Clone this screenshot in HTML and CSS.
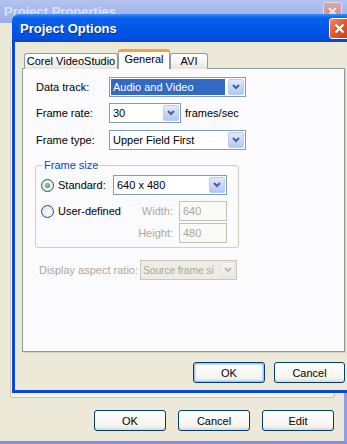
FILE: index.html
```html
<html>
	<head>
		<title>Project Options</title>
		<meta charset="utf-8"/>
		<link rel="stylesheet" href="styles.css">
	</head>
	<body>
		<div class="bg-window">
			<div class="bg-title">
				<span class="bg-title-text">Project Properties</span>
				<span class="bg-close">
					<svg width="9" height="9" viewBox="0 0 9 9"><path d="M1 1 L8 8 M8 1 L1 8" stroke="#f3e6e8" stroke-width="2"/></svg>
				</span>
			</div>
			<div class="bg-body">
				<div class="bg-panel"></div>
				<div class="bg-buttons">
					<button class="xp-btn">OK</button>
					<button class="xp-btn">Cancel</button>
					<button class="xp-btn">Edit</button>
				</div>
			</div>
		</div>

		<div class="dialog">
			<div class="titlebar">
				<span class="title-text">Project Options</span>
				<span class="close-btn">
					<svg width="11" height="11" viewBox="0 0 11 11"><path d="M1.5 1.5 L9.5 9.5 M9.5 1.5 L1.5 9.5" stroke="#fff" stroke-width="2.2"/></svg>
				</span>
			</div>
			<div class="dialog-body">
				<div class="tabs">
					<div class="tab tab-corel">Corel VideoStudio</div>
					<div class="tab tab-active tab-general">General</div>
					<div class="tab tab-avi">AVI</div>
				</div>
				<div class="tab-panel">
					<div class="row row-first">
						<span class="label">Data track:</span>
						<div class="combo combo-wide">
							<span class="combo-text combo-selected">Audio and Video</span>
							<span class="combo-btn"><svg width="8" height="6" viewBox="0 0 8 6"><path d="M1 1 L4 4 L7 1" fill="none" stroke="#4d6185" stroke-width="2"/></svg></span>
						</div>
					</div>
					<div class="row row-second">
						<span class="label">Frame rate:</span>
						<div class="combo combo-rate">
							<span class="combo-text">30</span>
							<span class="combo-btn"><svg width="8" height="6" viewBox="0 0 8 6"><path d="M1 1 L4 4 L7 1" fill="none" stroke="#4d6185" stroke-width="2"/></svg></span>
						</div>
						<span class="unit">frames/sec</span>
					</div>
					<div class="row row-third">
						<span class="label">Frame type:</span>
						<div class="combo combo-wide">
							<span class="combo-text">Upper Field First</span>
							<span class="combo-btn"><svg width="8" height="6" viewBox="0 0 8 6"><path d="M1 1 L4 4 L7 1" fill="none" stroke="#4d6185" stroke-width="2"/></svg></span>
						</div>
					</div>

					<fieldset class="group">
						<legend>Frame size</legend>
						<div class="row">
							<span class="radio-item radio-std"><span class="radio checked"></span>Standard:</span>
							<div class="combo combo-size">
								<span class="combo-text">640 x 480</span>
								<span class="combo-btn"><svg width="8" height="6" viewBox="0 0 8 6"><path d="M1 1 L4 4 L7 1" fill="none" stroke="#4d6185" stroke-width="2"/></svg></span>
							</div>
						</div>
						<div class="row row-user">
							<span class="radio-item radio-user"><span class="radio"></span>User-defined</span>
							<span class="sub-label">Width:</span>
							<span class="field">640</span>
						</div>
						<div class="row row-height">
							<span class="spacer"></span>
							<span class="sub-label">Height:</span>
							<span class="field">480</span>
						</div>
					</fieldset>

					<div class="row row-aspect">
						<span class="label label-disabled">Display aspect ratio:</span>
						<div class="combo combo-disabled">
							<span class="combo-text">Source frame si</span>
							<span class="combo-btn"><svg width="8" height="6" viewBox="0 0 8 6"><path d="M1 1 L4 4 L7 1" fill="none" stroke="#bdbcb4" stroke-width="2"/></svg></span>
						</div>
					</div>
				</div>
				<div class="dialog-buttons">
					<button class="xp-btn xp-default">OK</button>
					<button class="xp-btn btn-cancel">Cancel</button>
				</div>
			</div>
		</div>
	</body>
</html>
```

FILE: styles.css
```css
body {
	margin: 0;
	width: 347px;
	height: 444px;
	overflow: hidden;
	position: relative;
	font-family: "Liberation Sans", Arial, sans-serif;
	font-size: 11px;
	color: #000;
	background-color: #ece9d8;
}

/* window behind */
.bg-window {
	height: 444px;
	box-sizing: border-box;
	display: flex;
	flex-direction: column;
	border-right: 3px solid #8e9fe2;
	border-bottom: 3px solid #8191dc;
}

.bg-title {
	height: 23px;
	flex-shrink: 0;
	display: flex;
	justify-content: space-between;
	align-items: flex-start;
	background: linear-gradient(#b3c2ee, #9cade5);
	margin-right: -3px;
	padding-left: 4px;
}

.bg-title-text {
	font-weight: bold;
	font-size: 13px;
	color: #d9e1f6;
	margin-top: 4px;
}

.bg-close {
	width: 19px;
	height: 19px;
	margin-top: 2px;
	margin-right: 5px;
	box-sizing: border-box;
	border: 1px solid #e6dbe2;
	border-radius: 3px;
	background: linear-gradient(#d6a6a8, #c58b8e);
	display: flex;
	align-items: center;
	justify-content: center;
}

.bg-body {
	flex: 1;
	display: flex;
	flex-direction: column;
	background-color: #ece9d8;
}

.bg-panel {
	margin-top: 24px;
	margin-left: 10px;
	width: 325px;
	height: 351px;
	box-sizing: border-box;
	border: 1px solid #c7c5b6;
	border-top: none;
	border-radius: 0 0 3px 3px;
	background-color: #f3f2eb;
	box-shadow: inset 1px 0 0 #fff;
}

.bg-buttons {
	display: flex;
	justify-content: flex-end;
	gap: 12px;
	margin-top: 12px;
	padding-right: 10px;
}

/* xp push button */
.xp-btn {
	width: 72px;
	height: 21px;
	box-sizing: border-box;
	border: 1px solid #003c74;
	border-radius: 3px;
	background: linear-gradient(#ffffff, #f5f4ef 80%, #dcd8cc);
	font-family: "Liberation Sans", Arial, sans-serif;
	font-size: 11px;
	color: #000;
	padding: 0;
}

.xp-default {
	box-shadow: inset 0 0 0 1px #a9c1ee, inset 0 0 0 2px #cddcf7;
}

.btn-cancel {
	width: 71px;
}

/* active dialog */
.dialog {
	position: absolute;
	left: 12px;
	top: 14px;
	width: 344px;
}

.titlebar {
	height: 28px;
	box-sizing: border-box;
	border-radius: 7px 7px 0 0;
	background: linear-gradient(#3d8ffa 0px, #0b61ec 4px, #0157e8 50%, #0150e0 85%, #0645c8 100%);
	display: flex;
	align-items: center;
	justify-content: space-between;
	padding-left: 8px;
	padding-right: 6px;
}

.title-text {
	color: #fff;
	font-weight: bold;
	font-size: 13px;
	text-shadow: 1px 1px 0 #0a2f8e;
}

.close-btn {
	width: 21px;
	height: 21px;
	box-sizing: border-box;
	border: 1px solid #fff;
	border-radius: 3px;
	background: linear-gradient(135deg, #f08a66, #e2552c 50%, #c83d1c);
	display: flex;
	align-items: center;
	justify-content: center;
}

.dialog-body {
	background-color: #ece9d8;
	border: 3px solid #0a46d8;
	border-top: none;
	padding: 8px 8px 7px 7px;
}

.tabs {
	display: flex;
	align-items: flex-end;
	height: 18px;
	padding-left: 2px;
	position: relative;
	z-index: 1;
}

.tab {
	height: 16px;
	box-sizing: border-box;
	border: 1px solid #919b9c;
	border-bottom: none;
	border-radius: 3px 3px 0 0;
	background: linear-gradient(#ffffff, #f3f3ef 60%, #e6e5de);
	text-align: center;
	line-height: 15px;
	margin-bottom: -1px;
}

.tab-corel {
	width: 94px;
}

.tab-general {
	width: 52px;
}

.tab-avi {
	width: 38px;
}

.tab-active {
	height: 20px;
	background: #fcfcfe;
	border-top: 3px solid #f3a33a;
	line-height: 15px;
	margin-bottom: -1px;
}

.tab-panel {
	height: 284px;
	box-sizing: border-box;
	border: 1px solid #919b9c;
	background-color: #fbfbfd;
	padding: 8px 0 0 13px;
	box-shadow: 1px 1px 0 #d3d1c4;
}

.row {
	display: flex;
	align-items: center;
	height: 20px;
}

.row-second {
	margin-top: 6px;
}

.row-third {
	margin-top: 7px;
}

.label {
	width: 73px;
	flex-shrink: 0;
}

.unit {
	margin-left: 4px;
}

/* combo box */
.combo {
	height: 20px;
	box-sizing: border-box;
	border: 1px solid #7f9db9;
	background-color: #fff;
	display: flex;
	align-items: stretch;
	overflow: hidden;
}

.combo-wide {
	width: 137px;
}

.combo-rate {
	width: 72px;
}

.combo-size {
	width: 114px;
}

.combo-text {
	flex: 1;
	padding-left: 3px;
	line-height: 18px;
	white-space: nowrap;
	overflow: hidden;
}

.combo-selected {
	margin: 1px 2px 1px 1px;
	padding-left: 2px;
	line-height: 16px;
	background-color: #316ac5;
	color: #fff;
}

.combo-btn {
	width: 16px;
	margin: 1px;
	box-sizing: border-box;
	border: 1px solid #bacdf5;
	border-radius: 2px;
	background: linear-gradient(#e1eafe, #c3d5fc 60%, #b2c7f5);
	display: flex;
	align-items: center;
	justify-content: center;
}

.combo-disabled {
	width: 97px;
	border-color: #c9c7ba;
	background-color: #eeede5;
	color: #aca899;
}

.combo-disabled .combo-text {
	padding-left: 2px;
	font-size: 10.5px;
	letter-spacing: -0.2px;
}

.combo-disabled .combo-btn {
	width: 15px;
	border-color: #e4e3dc;
	background: linear-gradient(#f6f6f2, #e9e8e2);
}

/* group box */
.group {
	margin: 9px 0 0 -1px;
	padding: 4px 0 4px 5px;
	width: 204px;
	box-sizing: border-box;
	border: 1px solid #d0d0bf;
	border-radius: 3px;
	min-inline-size: 0;
}

.group legend {
	color: #0046d5;
	padding: 0 2px;
	margin-left: 1px;
}

.radio-item {
	display: flex;
	align-items: center;
	flex-shrink: 0;
}

.radio-std {
	width: 72px;
}

.radio-user {
	width: 94px;
}

.spacer {
	width: 94px;
	flex-shrink: 0;
}

.radio {
	width: 13px;
	height: 13px;
	box-sizing: border-box;
	border: 1px solid #1c5180;
	border-radius: 50%;
	background: radial-gradient(circle at 60% 60%, #ffffff, #dcdad2);
	margin-right: 4px;
	display: flex;
	align-items: center;
	justify-content: center;
}

.radio.checked::after {
	content: "";
	width: 5px;
	height: 5px;
	border-radius: 50%;
	background: radial-gradient(circle at 40% 40%, #8be07f, #21a121);
}

.row-user {
	margin-top: 6px;
}

.row-height {
	margin-top: 2px;
}

.sub-label {
	width: 44px;
	flex-shrink: 0;
	text-align: right;
	padding-right: 6px;
	box-sizing: border-box;
	color: #aca899;
}

.field {
	width: 48px;
	height: 20px;
	box-sizing: border-box;
	border: 1px solid #c3c1b5;
	background-color: #fafaf7;
	color: #aca899;
	padding-left: 3px;
	line-height: 18px;
}

.row-aspect {
	margin-top: 12px;
}

.label-disabled {
	width: 104px;
	padding-left: 3px;
	box-sizing: border-box;
	color: #aca899;
}

.dialog-buttons {
	display: flex;
	justify-content: flex-end;
	gap: 9px;
	margin-top: 10px;
}
```
